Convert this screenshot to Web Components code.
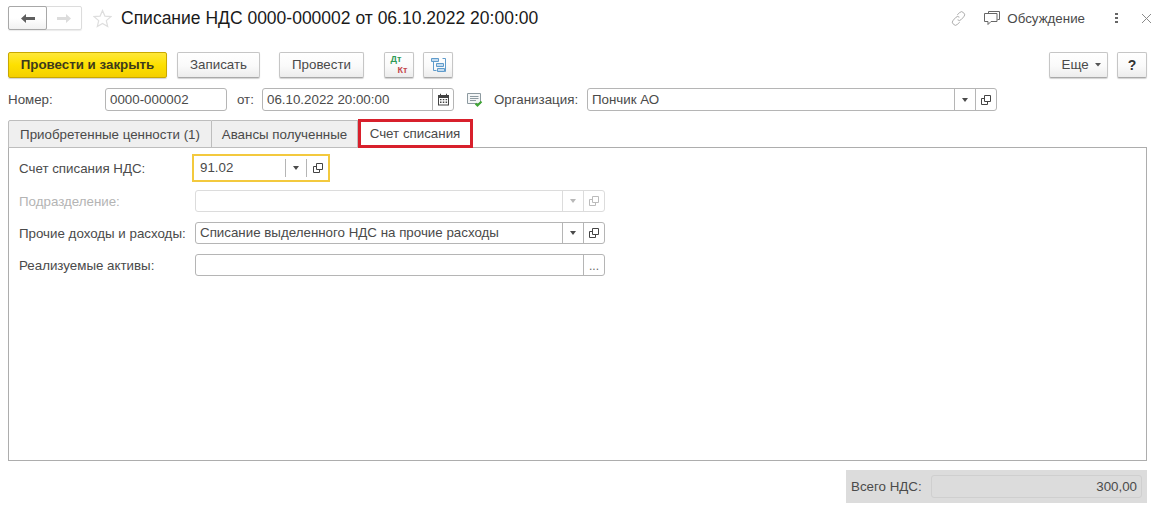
<!DOCTYPE html>
<html lang="ru">
<head>
<meta charset="utf-8">
<title>Списание НДС</title>
<style>
	html, body { margin: 0; background: #fff; }
	body { font: 13.33px "Liberation Sans", Arial, sans-serif; color: #4b4b4b; }
</style>
</head>
<body>
<doc-form></doc-form>

<script>
const ICON_OPEN = `<svg width="10" height="10" viewBox="0 0 10 10" fill="none" stroke="currentColor"><path d="M3.5.5h6v6h-6z"/><path d="M3.500 3.500h-3v6h6v-3"/></svg>`;

class UiButton extends HTMLElement {
	constructor() {
		super();
		this.attachShadow({ mode: "open" });
		this.shadowRoot.innerHTML = `
			<style>
				:host {
					display: inline-flex;
					align-items: center;
					justify-content: center;
					box-sizing: border-box;
					height: 26px;
					padding-bottom: 1px;
					border: 1px solid #c6c6c6;
					border-bottom-color: #a9a9a9;
					border-radius: 2px;
					background: linear-gradient(#fff 0%, #fafafa 55%, #ececec 100%);
					box-shadow: 0 1px 1px rgba(0,0,0,.18);
					color: #4a4a4a;
					font-size: 13.33px;
				}
				:host([primary]) {
					border-color: #c9a800;
					background: linear-gradient(#ffe83a 0%, #fde000 50%, #f4cf00 100%);
					color: #3d3a1c;
					font-weight: bold;
				}
			</style>
			<slot></slot>
		`;
	}
}

class UiField extends HTMLElement {
	constructor() {
		super();
		this.attachShadow({ mode: "open" });
		const buttons = (this.getAttribute("buttons") || "").split(" ").filter(Boolean);
		const parts = buttons.map(b => {
			if (b === "drop") return `<span class="btn drop"><i></i></span>`;
			if (b === "open") return `<span class="btn open">${ICON_OPEN}</span>`;
			if (b === "dots") return `<span class="btn dots">...</span>`;
			if (b === "cal") return `<span class="btn cal"><svg width="13" height="13" viewBox="0 0 13 13"><path fill="#444" d="M1 2h2V.8h1V2h5V.8h1V2h2v10.500H1z"/><path fill="#fff" d="M2 5h9v6.500H2z"/><path fill="#444" d="M3 6h1.500v1.300H3zM5.800 6h1.500v1.300H5.800zM8.600 6h1.500v1.300H8.600zM3 8.600h1.500v1.300H3zM5.800 8.600h1.500v1.300H5.800zM8.600 8.600h1.500v1.300H8.600z"/></svg></span>`;
			return "";
		}).join("");
		this.shadowRoot.innerHTML = `
			<style>
				:host {
					display: flex;
					box-sizing: border-box;
					height: 22px;
					border: 1px solid #b5b5b5;
					border-radius: 3px;
					background: #fff;
					color: #4a4a4a;
					font-size: 13.33px;
					line-height: 20px;
				}
				:host([disabled]) { border-color: #dcdcdc; color: #b8b8b8; }
				:host([focused]) {
					height: 28px;
					border: 2px solid #f3c93e;
					border-radius: 0;
					line-height: 24px;
				}
				.val { flex: 1; min-width: 0; padding-left: 4px; white-space: nowrap; overflow: hidden; }
				:host([focused]) .val { padding-left: 6px; }
				.btn {
					display: flex;
					align-items: center;
					justify-content: center;
					width: 20px;
					border-left: 1px solid #b5b5b5;
				}
				:host([disabled]) .btn { border-left-color: #dcdcdc; }
				:host([focused]) .btn { margin: 3px 0; }
				:host([focused]) .open { width: 21px; }
				.drop i { border: 3px solid transparent; border-top: 4px solid currentColor; border-bottom: 0; }
				.dots { align-items: flex-end; padding-bottom: 2px; font-size: 12px; line-height: 14px; color: #666; }
				.open svg { color: #444; }
				:host([disabled]) .open svg { color: #bbb; }
			</style>
			<span class="val"><slot></slot></span>${parts}
		`;
	}
}

class UiTab extends HTMLElement {
	constructor() {
		super();
		this.attachShadow({ mode: "open" });
		this.shadowRoot.innerHTML = `
			<style>
				:host {
					display: flex;
					align-items: center;
					justify-content: center;
					box-sizing: border-box;
					height: 28px;
					margin-bottom: -1px;
					border: 1px solid #bdbdbd;
					border-left-width: 0;
					background: #efefef;
					color: #4a4a4a;
					font-size: 13.33px;
				}
				:host([first]) { border-left-width: 1px; border-radius: 2px 0 0 0; }
				:host([active]) {
					height: 29px;
					padding-right: 1px;
					border: 3px solid #d8202c;
					background: #fff;
				}
			</style>
			<slot></slot>
		`;
	}
}

class FormRow extends HTMLElement {
	constructor() {
		super();
		this.attachShadow({ mode: "open" });
		this.shadowRoot.innerHTML = `
			<style>
				:host {
					display: grid;
					grid-template-columns: 176px 410px;
					align-items: center;
					height: 22px;
					color: #4a4a4a;
					font-size: 13.33px;
				}
				:host([disabled]) { color: #b4b4b4; }
			</style>
			<slot name="label"></slot>
			<slot></slot>
		`;
	}
}

class DocHeader extends HTMLElement {
	constructor() {
		super();
		this.attachShadow({ mode: "open" });
		this.shadowRoot.innerHTML = `
			<style>
				:host { display: flex; align-items: center; height: 24px; margin-top: 6px; color: #4a4a4a; }
				.nav {
					display: flex;
					box-sizing: border-box;
					width: 74px;
					height: 24px;
					border: 1px solid #dcdcdc;
					border-radius: 2px;
					box-shadow: 0 1px 1px rgba(0,0,0,.08);
				}
				.nav span { display: flex; align-items: center; justify-content: center; }
				.back {
					width: 37px;
					margin: -1px 0 -1px -1px;
					border: 1px solid #a8a8a8;
					border-radius: 2px;
					background: linear-gradient(#fff 50%, #f1f1f1);
				}
				.fwd { flex: 1; }
				.star { margin-left: 11px; display: flex; }
				h1 {
					margin: 0 0 0 9px;
					font-size: 17.5px;
					font-weight: normal;
					color: #1a1a1a;
					white-space: nowrap;
				}
				.right { margin-left: auto; margin-right: -4px; display: flex; align-items: center; font-size: 13.33px; }
				.right svg { display: block; }
				.talk { margin-left: 18px; margin-right: 7px; }
				.more { margin-left: 30px; }
				.close { margin-left: 24px; }
			</style>
			<div class="nav">
				<span class="back"><svg width="14" height="9" viewBox="0 0 14 9"><path fill="#5f5f5f" d="M0 4.500 5 0v3h9v3H5v3z"/></svg></span>
				<span class="fwd"><svg width="14" height="9" viewBox="0 0 14 9"><path fill="#dcdcdc" d="M14 4.500 9 0v3H0v3h9v3z"/></svg></span>
			</div>
			<span class="star"><svg width="19" height="19" viewBox="0 0 19 19"><path fill="#fff" stroke="#dedede" stroke-width="1.200" d="M9.500 1.500l2.400 5.600 6 .5-4.600 4 1.400 5.900-5.200-3.100-5.200 3.100 1.400-5.900-4.600-4 6-.5z"/></svg></span>
			<h1>Списание НДС 0000-000002 от 06.10.2022 20:00:00</h1>
			<div class="right">
				<svg width="15" height="15" viewBox="0 0 17 17" fill="none" stroke="#a0a0a0"><path d="M7 4.500 9.800 1.800a3 3 0 0 1 4.300 0l.4.400a3 3 0 0 1 0 4.300L11.500 9.800a3 3 0 0 1-4 .2"/><path d="M10 12.500 7.200 15.200a3 3 0 0 1-4.300 0l-.4-.4a3 3 0 0 1 0-4.300L5.500 7.200a3 3 0 0 1 4-.2"/></svg>
				<svg class="talk" width="16" height="14" viewBox="0 0 16 14" fill="none" stroke="#666"><path d="M4.500 2.500v-2h11v8h-2"/><path d="M.5 2.500h12.500v8H7l-3 3v-3H.5z"/></svg>
				<span>Обсуждение</span>
				<svg class="more" width="3" height="10" viewBox="0 0 3 10" fill="#666"><path d="M0 0h3v2H0zM0 4h3v2H0zM0 8h3v2H0z"/></svg>
				<svg class="close" width="9" height="9" viewBox="0 0 9 9" stroke="#8a8a8a"><path d="M0 0l9 9M9 0L0 9"/></svg>
			</div>
		`;
	}
}

class DocForm extends HTMLElement {
	constructor() {
		super();
		this.attachShadow({ mode: "open" });
		this.shadowRoot.innerHTML = `
			<style>
				:host {
					display: flex;
					flex-direction: column;
					box-sizing: border-box;
					width: 1160px;
					height: 512px;
					padding: 0 13px 0 8px;
				}
				.toolbar { display: flex; margin-top: 22px; }
				.toolbar .push { margin-left: auto; }
				.dtkt {
					display: grid;
					grid-template-columns: 7px 11px;
					grid-template-rows: 11px 11px;
					font: bold 9px/11px "Liberation Sans", sans-serif;
					margin-left: 1px;
				}
				.dtkt b:first-child { color: #2f9a55; grid-column: 1 / 3; grid-row: 1; }
				.dtkt b:last-child { color: #c4474d; grid-column: 2; grid-row: 2; }
				.head { display: flex; align-items: center; height: 23px; margin-top: 10px; }
				.head ui-field { height: 23px; line-height: 21px; }
				.tabs { display: flex; margin-top: 8px; position: relative; z-index: 1; height: 28px; align-items: flex-end; }
				.panel {
					box-sizing: border-box;
					flex: none;
					height: 314px;
					padding: 6px 0 0 10px;
					border: 1px solid #adadad;
				}
				.rows { display: flex; flex-direction: column; gap: 10px; margin-top: 8px; }
				.first-row {
					display: grid;
					grid-template-columns: 173px 138px;
					align-items: center;
					height: 28px;
				}
				.foot {
					display: flex;
					align-items: center;
					justify-content: space-between;
					box-sizing: border-box;
					align-self: flex-end;
					width: 301px;
					height: 33px;
					margin-top: 9px;
					padding: 0 5px;
					background: #dcdcdc;
				}
				.total {
					box-sizing: border-box;
					width: 211px;
					height: 23px;
					padding-right: 4px;
					border: 1px solid #cfcfcf;
					border-radius: 3px;
					text-align: right;
					line-height: 21px;
				}
			</style>
			<doc-header></doc-header>

			<div class="toolbar">
				<ui-button primary style="width:159px">Провести и закрыть</ui-button>
				<ui-button style="width:83px;margin-left:10px">Записать</ui-button>
				<ui-button style="width:85px;margin-left:19px">Провести</ui-button>
				<ui-button style="width:30px;margin-left:20px"><span class="dtkt"><b>Дт</b><b>Кт</b></span></ui-button>
				<ui-button style="width:30px;margin-left:9px">
					<svg width="15" height="14" viewBox="0 0 15 14" fill="#c3dbef" stroke="#5f9bcb"><path fill="none" d="M2.500 3.500v9h3M11.500.5h3v13h-1"/><path d="M.5.500h7v3h-7zM5.500 5.500h7v3h-7zM6.500 10.500h7v3h-7z"/></svg>
				</ui-button>
				<ui-button class="push" style="width:59px;padding-left:6px">Еще&nbsp;<svg width="6" height="4" viewBox="0 0 6 4" style="margin-left:3px"><path fill="#555" d="M0 0h6L3 3.500z"/></svg></ui-button>
				<ui-button style="width:30px;margin-left:9px;font-weight:bold;font-size:14px;color:#333">?</ui-button>
			</div>

			<div class="head">
				<span style="width:97px">Номер:</span>
				<ui-field style="width:122px">0000-000002</ui-field>
				<span style="margin-left:10px;width:25px">от:</span>
				<ui-field style="width:192px" buttons="cal">06.10.2022 20:00:00</ui-field>
				<svg style="margin-left:13px" width="16" height="14" viewBox="0 0 16 14" fill="none"><path stroke="#8d9aa0" fill="#f4f6f7" d="M.5.500h13v10H.5z"/><path stroke="#8d9aa0" d="M3 3.500h8.500M3 5.500h8.500M3 7.500h6"/><path stroke="#3fa535" stroke-width="2" d="M8.500 10.500l2 2 4-4"/></svg>
				<span style="margin-left:11px;width:93px">Организация:</span>
				<ui-field style="width:410px" buttons="drop open">Пончик АО</ui-field>
			</div>

			<div class="tabs">
				<ui-tab first style="width:204px">Приобретенные ценности (1)</ui-tab>
				<ui-tab style="width:146px">Авансы полученные</ui-tab>
				<ui-tab active style="width:115px">Счет списания</ui-tab>
			</div>

			<div class="panel">
				<div class="first-row">
					<span>Счет списания НДС:</span>
					<ui-field focused buttons="drop open">91.02</ui-field>
				</div>
				<div class="rows">
					<form-row disabled><span slot="label">Подразделение:</span><ui-field disabled buttons="drop open"></ui-field></form-row>
					<form-row><span slot="label">Прочие доходы и расходы:</span><ui-field buttons="drop open">Списание выделенного НДС на прочие расходы</ui-field></form-row>
					<form-row><span slot="label">Реализуемые активы:</span><ui-field buttons="dots"></ui-field></form-row>
				</div>
			</div>

			<div class="foot">
				<span>Всего НДС:</span>
				<div class="total">300,00</div>
			</div>
		`;
	}
}

customElements.define("ui-button", UiButton);
customElements.define("ui-field", UiField);
customElements.define("ui-tab", UiTab);
customElements.define("form-row", FormRow);
customElements.define("doc-header", DocHeader);
customElements.define("doc-form", DocForm);
</script>
</body>
</html>
